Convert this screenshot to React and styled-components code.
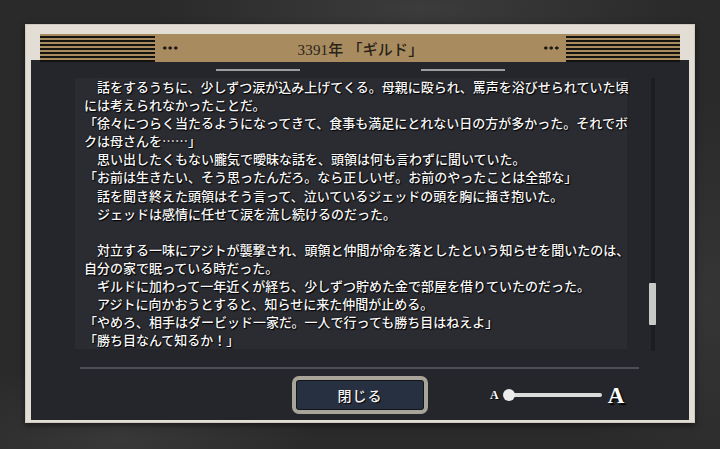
import React from 'react';
import styled, { createGlobalStyle } from 'styled-components';

const GlobalStyle = createGlobalStyle`
  html, body {
    margin: 0;
    padding: 0;
  }

  body {
    width: 720px;
    height: 449px;
    overflow: hidden;
    background:
      radial-gradient(ellipse 260px 60px at 420px 8px, #3c3c3c 0%, rgba(60, 60, 60, 0) 100%),
      radial-gradient(ellipse 200px 80px at 120px 440px, #383838 0%, rgba(56, 56, 56, 0) 100%),
      radial-gradient(ellipse 160px 200px at 710px 300px, #353535 0%, rgba(53, 53, 53, 0) 100%),
      #2a2a2a;
    font-family: "Noto Sans CJK JP", "Liberation Serif", sans-serif;
  }
`;

const lines = [
  { indent: true, text: '話をするうちに、少しずつ涙が込み上げてくる。母親に殴られ、罵声を浴びせられていた頃' },
  { text: 'には考えられなかったことだ。' },
  { text: '「徐々につらく当たるようになってきて、食事も満足にとれない日の方が多かった。それでボ' },
  { text: 'クは母さんを……」' },
  { indent: true, text: '思い出したくもない朧気で曖昧な話を、頭領は何も言わずに聞いていた。' },
  { text: '「お前は生きたい、そう思ったんだろ。なら正しいぜ。お前のやったことは全部な」' },
  { indent: true, text: '話を聞き終えた頭領はそう言って、泣いているジェッドの頭を胸に掻き抱いた。' },
  { indent: true, text: 'ジェッドは感情に任せて涙を流し続けるのだった。' },
  { text: '' },
  { indent: true, text: '対立する一味にアジトが襲撃され、頭領と仲間が命を落としたという知らせを聞いたのは、' },
  { text: '自分の家で眠っている時だった。' },
  { indent: true, text: 'ギルドに加わって一年近くが経ち、少しずつ貯めた金で部屋を借りていたのだった。' },
  { indent: true, text: 'アジトに向かおうとすると、知らせに来た仲間が止める。' },
  { text: '「やめろ、相手はダービッド一家だ。一人で行っても勝ち目はねえよ」' },
  { text: '「勝ち目なんて知るか！」' },
];

const Page = styled.div`
  width: 720px;
  height: 449px;
  box-sizing: border-box;
  padding: 24px 25px 0 25px;
`;

const Frame = styled.div`
  width: 670px;
  height: 399px;
  box-sizing: border-box;
  background: #e2ddd5;
  box-shadow: 0 0 0 1px #cfc9bf inset, 0 2px 6px rgba(0, 0, 0, 0.5);
  padding: 10px 6px 3px 6px;
  display: flex;
  flex-direction: column;
`;

const Header = styled.div`
  position: relative;
  z-index: 1;
  height: 28px;
  margin: 0 9px -2px 9px;
  background: #a88c60;
  display: flex;
  align-items: center;
`;

const Stripes = styled.div`
  width: ${(p) => p.$width}px;
  height: 28px;
  background: repeating-linear-gradient(
    to bottom,
    #a88c60 0px,
    #a88c60 2px,
    #15130f 2px,
    #15130f 3.6px,
    #a88c60 3.6px,
    #a88c60 4px
  );
`;

const Dots = styled.div`
  width: 16px;
  height: 4px;
  margin: 0 7px;
  background: radial-gradient(circle, #1c1812 1.4px, rgba(0, 0, 0, 0) 1.8px) 0 0 / 5.5px 4px repeat-x;
`;

const Title = styled.div`
  flex: 1;
  text-align: center;
  font-family: "Liberation Serif", "Noto Sans CJK JP", serif;
  font-size: 15px;
  font-weight: 500;
  color: #2a2217;
  letter-spacing: 0.2px;
`;

const Panel = styled.div`
  flex: 1;
  background: #25262b;
  display: flex;
  flex-direction: column;
`;

const Tabs = styled.div`
  display: flex;
  justify-content: center;
  gap: 121px;
  padding-top: 9px;
`;

const TabLine = styled.div`
  width: 84px;
  height: 2px;
  background: #9d9da0;
`;

const Body = styled.div`
  display: flex;
  margin-top: 7px;
  padding-left: 44px;
`;

const TextBox = styled.div`
  width: 552px;
  height: 271px;
  box-sizing: border-box;
  padding-left: 9px;
  background: #2b2c32;
  overflow: visible;
`;

const Line = styled.div`
  height: 18.1px;
  line-height: 18.1px;
  font-size: 13px;
  font-weight: 500;
  white-space: nowrap;
  color: #f8f8f8;
  text-shadow: 1px 1px 1px #000, 0 0 2px #000;
  padding-left: ${(p) => (p.$indent ? '13px' : '0')};
`;

const Track = styled.div`
  position: relative;
  width: 4px;
  height: 273px;
  margin-left: 24px;
  background: #1c1d22;
`;

const Thumb = styled.div`
  position: absolute;
  left: -2px;
  top: 205px;
  width: 7px;
  height: 42px;
  border-radius: 1px;
  background: #c9c9c9;
`;

const Divider = styled.div`
  height: 2px;
  margin: 16px 0 0 49px;
  width: 559px;
  background: #4d4e55;
`;

const Footer = styled.div`
  display: grid;
  grid-template-columns: 1fr auto 1fr;
  align-items: center;
  margin-top: 7px;
`;

const CloseButton = styled.button`
  width: 136px;
  height: 38px;
  box-sizing: border-box;
  border: 4px solid #a8a499;
  border-radius: 7px;
  padding: 0;
  background: #273041;
  box-shadow: inset 0 0 0 1px #12151b;
  color: #f4f4f4;
  font-family: "Noto Sans CJK JP", sans-serif;
  font-size: 14px;
  font-weight: 500;
  letter-spacing: 1px;
  text-shadow: 1px 1px 1px #000;
  cursor: pointer;
`;

const SizeControl = styled.div`
  display: flex;
  align-items: center;
  padding-left: 62px;
`;

const Glyph = styled.span`
  font-family: "Liberation Serif", serif;
  font-weight: bold;
  color: #fff;
  font-size: ${(p) => p.$size}px;
  text-shadow: ${(p) => (p.$size > 14 ? '2px 2px 1px #000' : '1px 1px 1px #000')};
  line-height: 1;
`;

const Slider = styled.div`
  position: relative;
  width: 96px;
  height: 4px;
  margin: 0 6px 0 7px;
  border-radius: 2px;
  background: #dcdcdc;
`;

const Knob = styled.div`
  position: absolute;
  left: -3px;
  top: -4px;
  width: 12px;
  height: 12px;
  border-radius: 50%;
  background: #ececec;
`;

export default function App() {
  return (
    <>
      <GlobalStyle />
      <Page>
        <Frame>
          <Header>
            <Stripes $width={115} />
            <Dots />
            <Title>3391年 「ギルド」</Title>
            <Dots />
            <Stripes $width={114} />
          </Header>
          <Panel>
            <Tabs>
              <TabLine />
              <TabLine />
            </Tabs>
            <Body>
              <TextBox>
                {lines.map((l, i) => (
                  <Line key={i} $indent={l.indent}>
                    {l.text || '\u00a0'}
                  </Line>
                ))}
              </TextBox>
              <Track>
                <Thumb />
              </Track>
            </Body>
            <Divider />
            <Footer>
              <div />
              <CloseButton>閉じる</CloseButton>
              <SizeControl>
                <Glyph $size={12}>A</Glyph>
                <Slider>
                  <Knob />
                </Slider>
                <Glyph $size={23}>A</Glyph>
              </SizeControl>
            </Footer>
          </Panel>
        </Frame>
      </Page>
    </>
  );
}
